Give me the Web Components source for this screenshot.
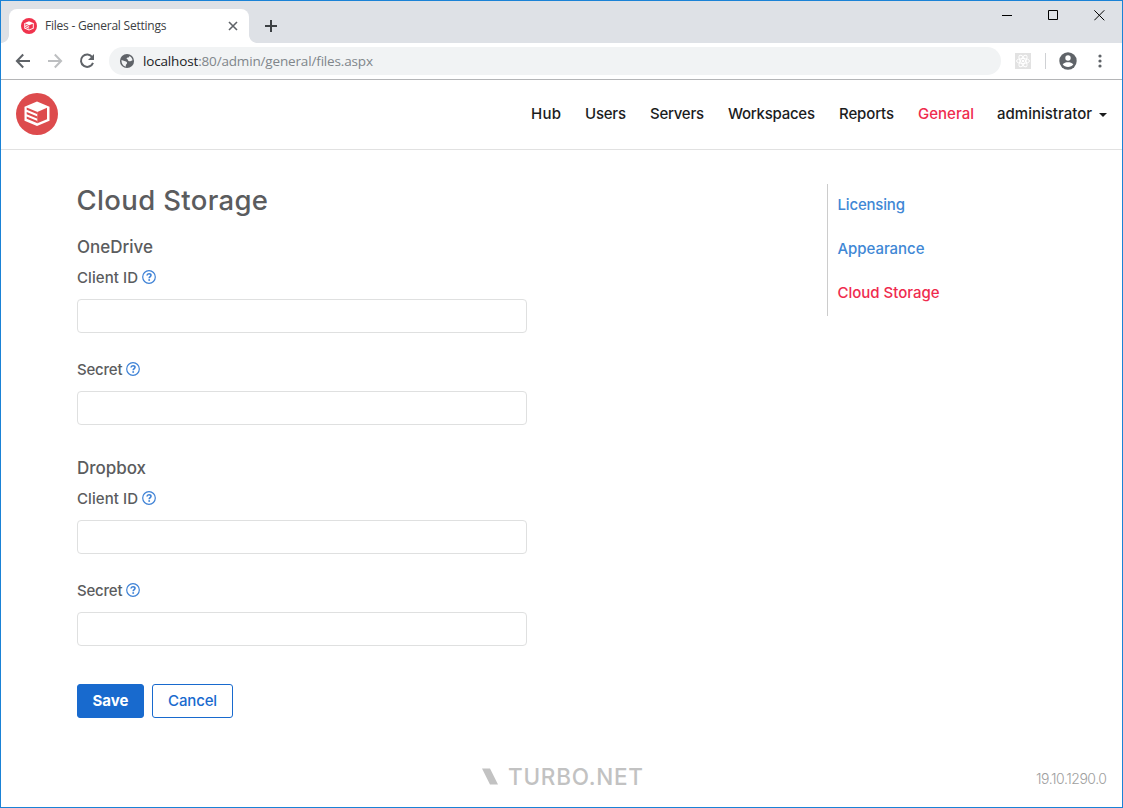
<!DOCTYPE html>
<html lang="en">
<head>
<meta charset="utf-8">
<title>Files - General Settings</title>
<style>
html, body { margin: 0; height: 100%; overflow: hidden; background: #fff; }
body { font-family: Inter, "Liberation Sans", sans-serif; }
</style>
</head>
<body>
<browser-window>
  <browser-tabs slot="chrome" label="Files - General Settings"></browser-tabs>
  <browser-toolbar slot="chrome"></browser-toolbar>
  <site-header></site-header>
  <settings-page></settings-page>
  <site-footer></site-footer>
</browser-window>
<script>
function define(name, html, setup) {
  const template = document.createElement('template');
  template.innerHTML = html;
  customElements.define(name, class extends HTMLElement {
    connectedCallback() {
      if (this.shadowRoot) return;
      const root = this.attachShadow({ mode: 'open' });
      root.append(template.content.cloneNode(true));
      if (setup) setup(this, root);
    }
  });
}

/* Text whose tracking is adjusted to fill a given width. */
define('tracked-text', `
<style>
:host { display: inline-block; white-space: nowrap; overflow: visible; }
span { display: inline-block; white-space: nowrap; }
</style><span><slot></slot></span>`, (host, root) => {
  const target = Number(host.getAttribute('width'));
  const span = root.querySelector('span');
  const count = host.textContent.length;
  const natural = span.getBoundingClientRect().width;
  if (natural && count > 1) span.style.letterSpacing = ((target - natural) / (count - 1)).toFixed(3) + 'px';
  host.style.width = target + 'px';
});

define('cube-logo', `
<style>:host { display: block; } svg { display: block; width: 100%; height: 100%; }</style>
<svg viewBox="0 0 42 42">
  <circle cx="21" cy="21" r="21" fill="var(--disc, #dd4b4d)"/>
  <path d="M21 8.5 33.500 13.700V27.700L21 33 8.500 27.700V13.700Z" fill="#fff"/>
  <path d="M21.300 18.900 31 14.800V26.200L21.300 30.200Z" fill="var(--disc, #dd4b4d)"/>
  <path d="M10.700 14.500 21.500 19V21.300L10.700 16.800ZM10.700 19 21.500 23.500V25.700L10.700 21.200ZM10.700 23.400 21.500 27.900V30.200L10.700 25.700Z" fill="var(--disc, #dd4b4d)"/>
</svg>`);

define('browser-window', `
<style>
:host { display: flex; flex-direction: column; box-sizing: border-box; width: 1123px; height: 808px; border: 1px solid #1a82d6; background: #fff; }
</style><slot name="chrome"></slot><slot></slot>`);

define('browser-tabs', `
<style>
:host { display: flex; box-sizing: border-box; height: 42px; padding: 8px 0 0 8px; background: #dee1e6; font: 12px/16px "Open Sans", "Noto Sans", sans-serif; color: #3c4043; }
.tab { position: relative; box-sizing: border-box; display: flex; align-items: center; width: 240px; height: 34px; padding: 0 11px 0 12px; background: #fff; border-radius: 8px 8px 0 0; }
.tab::before, .tab::after { content: ""; position: absolute; bottom: 0; width: 8px; height: 8px; }
.tab::before { left: -8px; background: radial-gradient(circle at 0 0, transparent 7.5px, #fff 8.2px); }
.tab::after { right: -8px; background: radial-gradient(circle at 100% 0, transparent 7.5px, #fff 8.2px); }
cube-logo { width: 16px; height: 16px; margin-right: 8px; --disc: #f0334d; }
.x { margin-left: auto; }
svg { display: block; fill: none; }
.plus { margin: 11px 0 0 16px; }
.controls { display: flex; gap: 35px; margin: 0 17px 0 auto; padding-top: 1px; height: 11px; }
</style>
<div class="tab"><cube-logo></cube-logo><tracked-text width="121.5">Files - General Settings</tracked-text>
<svg class="x" width="10" height="10" stroke="#5f6368" stroke-width="1.6"><path d="M1 1 9 9M9 1 1 9"/></svg></div>
<svg class="plus" width="12" height="12" stroke="#3c4043" stroke-width="2"><path d="M6 0V12M0 6H12"/></svg>
<div class="controls">
<svg width="11" height="11" stroke="#000"><path d="M0 5.5H10"/></svg>
<svg width="11" height="11" stroke="#000"><path d="M.5 .5H9.5V9.5H.5Z"/></svg>
<svg width="11" height="11" stroke="#000"><path d="M.3 .3 10.3 10.3M10.3 .3 .3 10.3"/></svg>
</div>`);

define('browser-toolbar', `
<style>
:host { display: flex; align-items: center; box-sizing: border-box; height: 37px; padding: 0 12px; border-bottom: 1px solid #b4b5b7; background: #fff; }
svg { display: block; flex: none; }
.nav { display: flex; gap: 12px; }
.url { display: flex; align-items: center; box-sizing: border-box; width: 892px; height: 28px; margin-left: 12px; padding-left: 9px; border-radius: 14px; background: #f1f3f4; font: 13.5px/20px "Open Sans", "Noto Sans", sans-serif; color: #80868b; }
.url svg { margin-right: 7px; }
.url b { font-weight: 400; color: #202124; }
.ext { margin-left: 14px; }
.sep { width: 1px; height: 16px; margin: 0 12px 0 14px; background: #cfd1d4; }
.dots { margin-left: 20px; }
</style>
<div class="nav">
<svg width="20" height="20" viewBox="0 0 20 20" fill="none" stroke="#5f6368" stroke-width="2"><path d="M17 10H4.5M10.2 3.5 3.9 10l6.3 6.5"/></svg>
<svg width="20" height="20" viewBox="0 0 20 20" fill="none" stroke="#bdbfc1" stroke-width="2"><path d="M3 10H15.5M9.8 3.5 16.1 10l-6.3 6.5"/></svg>
<svg width="20" height="20" viewBox="0 0 20 20"><path d="M15.3 6.2A6.2 6.2 0 1 0 16 11.8" fill="none" stroke="#5f6368" stroke-width="2"/><path d="M17 3V9H11Z" fill="#5f6368"/></svg>
</div>
<div class="url">
<svg width="18" height="18" viewBox="0 0 24 24"><circle cx="12" cy="12" r="9.400" fill="#5f6368"/><path d="M4.700 10.800 9.500 12.200c1.800.4 2.800 1.300 2.600 2.600-.2 1.500-1.700 1.700-1.700 3.100v1.700C7 19 4.400 15.800 4.700 10.800ZM15.200 5.200c2.300 1.100 3.900 3.300 4.200 5.900l-2.900 1.100c-1.500.5-3.200-.4-3.200-1.700 0-1.100-1.800-.7-1.800-1.900 0-1 1.300-1 2.300-1.300.9-.3 1.200-1.100 1.400-2.100Z" fill="#f1f3f4"/></svg>
<tracked-text width="230"><b>localhost</b>:80/admin/general/files.aspx</tracked-text></div>
<svg class="ext" width="16" height="16" viewBox="0 0 16 16"><path fill="#e2e2e2" d="M0 0H16V16H0Z"/><g fill="none" stroke="#fff"><ellipse cx="8" cy="8" rx="6.500" ry="2.500"/><ellipse cx="8" cy="8" rx="6.500" ry="2.500" transform="rotate(60 8 8)"/><ellipse cx="8" cy="8" rx="6.500" ry="2.500" transform="rotate(120 8 8)"/></g><circle cx="8" cy="8" r="1.300" fill="#fff"/></svg>
<div class="sep"></div>
<svg width="20" height="20" viewBox="0 0 20 20"><circle cx="10" cy="10" r="8.700" fill="#5f6368"/><circle cx="10" cy="7" r="2.700" fill="#fff"/><path d="M4.700 13.300C5.700 11.800 8 11.200 10 11.200s4.300.6 5.300 2.100C14.200 15 12.200 15.900 10 15.900S5.800 15 4.700 13.300Z" fill="#fff"/></svg>
<svg class="dots" width="4" height="14" viewBox="0 0 4 14" fill="#5f6368"><circle cx="2" cy="2" r="1.600"/><circle cx="2" cy="7" r="1.600"/><circle cx="2" cy="12" r="1.600"/></svg>`);

define('site-header', `
<style>
:host { display: flex; align-items: center; box-sizing: border-box; height: 70px; padding: 0 15px; border-bottom: 1px solid #e1e1e1; font-size: 15px; font-weight: 550; line-height: 21px; color: #1b1c1d; }
cube-logo { width: 42px; height: 42px; margin-top: -1px; }
nav { display: flex; align-items: center; gap: 24px; margin: -3px 0 0 auto; }
.active { color: #ef2b4e; }
.user { display: flex; align-items: center; gap: 7px; margin-left: -1px; }
svg { margin-top: 3px; }
</style>
<cube-logo></cube-logo>
<nav>
<tracked-text width="30">Hub</tracked-text>
<tracked-text width="41">Users</tracked-text>
<tracked-text width="54">Servers</tracked-text>
<tracked-text width="87">Workspaces</tracked-text>
<tracked-text width="55">Reports</tracked-text>
<tracked-text width="56" class="active">General</tracked-text>
<div class="user"><tracked-text width="95">administrator</tracked-text><svg width="8" height="4"><path d="M0 0H8L4 4Z" fill="#1b1c1d"/></svg></div>
</nav>`);

define('form-field', `
<style>
:host { display: block; width: 450px; }
.label { display: flex; align-items: center; gap: 4px; height: 21px; margin-bottom: 11px; font-size: 15px; font-weight: 550; line-height: 21px; color: #5b5c5e; }
svg { display: block; margin: -1px 0 0 -.5px; }
input { display: block; box-sizing: border-box; width: 100%; height: 34px; margin: 0; border: 1px solid #dfe0e0; border-radius: 4px; background: #fff; outline: 0; }
</style>
<div class="label"><tracked-text></tracked-text>
<svg width="14" height="14" viewBox="0 0 14 14" fill="none" stroke="#3e82d6"><circle cx="7" cy="7" r="6.300" stroke-width="1.200"/><path d="M5 5.500C5.100 4.300 5.900 3.700 7 3.700s2 .6 2 1.600C9 6.500 7.200 6.600 7.200 8.200" stroke-width="1.600"/><path d="M7.200 9.200V10.800" stroke-width="1.700"/></svg></div>
<input type="text">`, (host, root) => {
  const text = root.querySelector('tracked-text');
  const label = host.getAttribute('label');
  const fitted = document.createElement('tracked-text');
  fitted.setAttribute('width', label === 'Secret' ? 45.5 : 61);
  fitted.textContent = label;
  text.replaceWith(fitted);
});

define('storage-provider', `
<style>
:host { display: block; height: 221px; }
h3 { margin: 0 0 8px; height: 24px; font-size: 17px; font-weight: 550; line-height: 25px; color: #5b5c5e; }
form-field + form-field { margin-top: 26px; }
</style>
<h3><slot></slot></h3>
<form-field label="Client ID"></form-field>
<form-field label="Secret"></form-field>`);

define('side-menu', `
<style>
:host { display: flex; flex-direction: column; box-sizing: border-box; height: 132px; padding-left: 9.5px; border-left: 1px solid #ccc; font-size: 15px; font-weight: 550; line-height: 42px; color: #4087d5; }
tracked-text { height: 44px; }
.active { color: #ef2b4e; }
</style>
<tracked-text width="67.5">Licensing</tracked-text>
<tracked-text width="87">Appearance</tracked-text>
<tracked-text width="102" class="active">Cloud Storage</tracked-text>`);

define('push-button', `
<style>
:host { display: inline-flex; }
button { box-sizing: border-box; width: 100%; height: 34px; padding: 0; border: 1px solid #186ace; border-radius: 3px; background: #fff; color: #186ace; font: inherit; font-size: 15px; font-weight: 550; line-height: 32px; }
:host([primary]) button { background: #186ace; color: #fff; font-weight: 650; }
</style><button><slot></slot></button>`);

define('settings-page', `
<style>
:host { display: flex; justify-content: space-between; flex: 1; box-sizing: border-box; padding: 30px 0 0 76px; }
h1 { margin: 0 0 15px; height: 40px; font-size: 27.5px; font-weight: 550; line-height: 41px; color: #5b5c5e; }
h1 tracked-text { margin-left: -.5px; }
.actions { display: flex; gap: 8px; margin-top: 7px; }
.save { width: 67px; } .cancel { width: 81px; }
side-menu { width: 295px; margin-top: 4px; }
</style>
<main>
<h1><tracked-text width="191.5">Cloud Storage</tracked-text></h1>
<storage-provider><tracked-text width="76">OneDrive</tracked-text></storage-provider>
<storage-provider><tracked-text width="69">Dropbox</tracked-text></storage-provider>
<div class="actions"><push-button primary class="save"><tracked-text width="36">Save</tracked-text></push-button><push-button class="cancel"><tracked-text width="49">Cancel</tracked-text></push-button></div>
</main>
<side-menu></side-menu>`);

define('site-footer', `
<style>
:host { display: grid; grid-template-columns: 1fr auto 1fr; align-items: center; height: 60px; padding: 0 15px; color: #c2c2c2; }
.brand { grid-column: 2; display: flex; align-items: center; gap: 10px; margin: -1px -1px 0 1px; font-size: 22.5px; line-height: 26px; font-weight: 550; }
.version { justify-self: end; margin-top: 3px; font-size: 14px; line-height: 18px; font-weight: 300; color: #a0a0a0; }
</style>
<div class="brand"><svg width="16" height="17"><path d="M0 .5H8L16 16.500H8Z" fill="#c2c2c2"/></svg><tracked-text width="135">TURBO.NET</tracked-text></div>
<tracked-text class="version" width="71">19.10.1290.0</tracked-text>`);
</script>
</body>
</html>
